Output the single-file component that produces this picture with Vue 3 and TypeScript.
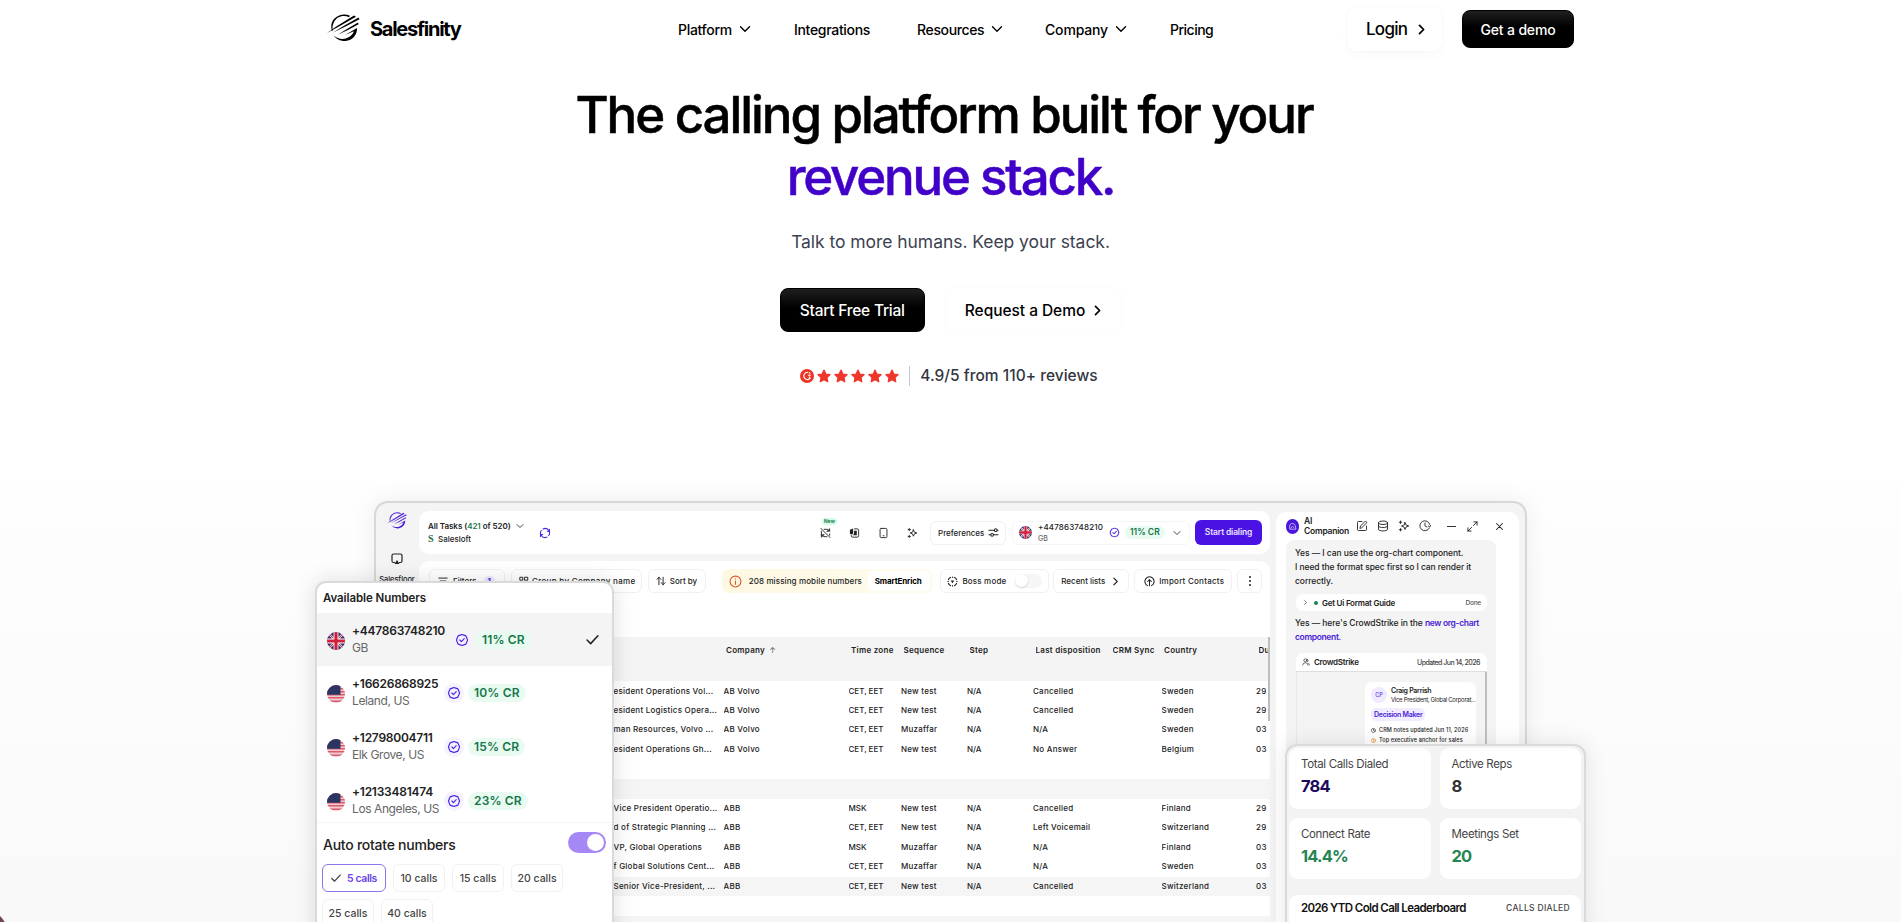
<script setup lang="ts">
import { computed, ref } from 'vue'

interface PhoneNumber {
  number: string
  place: string
  rate: string
  flag: 'uk' | 'us'
}

interface Task {
  title: string
  company: string
  zone: string
  sequence: string
  disposition: string
  country: string
  due: string
}

const navItems = [
  { label: 'Platform', menu: true },
  { label: 'Integrations', menu: false },
  { label: 'Resources', menu: true },
  { label: 'Company', menu: true },
  { label: 'Pricing', menu: false },
]

const numbers: PhoneNumber[] = [
  { number: '+447863748210', place: 'GB', rate: '11% CR', flag: 'uk' },
  { number: '+16626868925', place: 'Leland, US', rate: '10% CR', flag: 'us' },
  { number: '+12798004711', place: 'Elk Grove, US', rate: '15% CR', flag: 'us' },
  { number: '+12133481474', place: 'Los Angeles, US', rate: '23% CR', flag: 'us' },
]
const selected = ref('+447863748210')

const rotateOptions = [5, 10, 15, 20, 25, 40]
const rotateEvery = ref(5)
const autoRotate = ref(true)

const volvo: Task[] = [
  { title: 'esident Operations Vol...', company: 'AB Volvo', zone: 'CET, EET', sequence: 'New test', disposition: 'Cancelled', country: 'Sweden', due: '29' },
  { title: 'esident Logistics Opera...', company: 'AB Volvo', zone: 'CET, EET', sequence: 'New test', disposition: 'Cancelled', country: 'Sweden', due: '29' },
  { title: 'man Resources, Volvo ...', company: 'AB Volvo', zone: 'CET, EET', sequence: 'Muzaffar', disposition: 'N/A', country: 'Sweden', due: '03' },
  { title: 'esident Operations Gh...', company: 'AB Volvo', zone: 'CET, EET', sequence: 'New test', disposition: 'No Answer', country: 'Belgium', due: '03' },
]
const abb: Task[] = [
  { title: 'Vice President Operatio...', company: 'ABB', zone: 'MSK', sequence: 'New test', disposition: 'Cancelled', country: 'Finland', due: '29' },
  { title: 'd of Strategic Planning ...', company: 'ABB', zone: 'CET, EET', sequence: 'New test', disposition: 'Left Voicemail', country: 'Switzerland', due: '29' },
  { title: 'VP, Global Operations', company: 'ABB', zone: 'MSK', sequence: 'Muzaffar', disposition: 'N/A', country: 'Finland', due: '03' },
  { title: 'f Global Solutions Cent...', company: 'ABB', zone: 'CET, EET', sequence: 'Muzaffar', disposition: 'N/A', country: 'Sweden', due: '03' },
  { title: 'Senior Vice-President, ...', company: 'ABB', zone: 'CET, EET', sequence: 'New test', disposition: 'Cancelled', country: 'Switzerland', due: '03' },
]
const groups = computed(() => [volvo, abb])

const stats = [
  { label: 'Total Calls Dialed', value: '784', tone: 'navy' },
  { label: 'Active Reps', value: '8', tone: 'dark' },
  { label: 'Connect Rate', value: '14.4%', tone: 'green' },
  { label: 'Meetings Set', value: '20', tone: 'green' },
]
</script>

<template>
  <!-- Shared icon symbols -->
  <svg class="sprite" aria-hidden="true">
    <symbol id="i-logo" viewBox="0 0 33 28">
      <path fill="currentColor" d="M22 3.200C17 .6 9.500 2 6.800 8.500C5.400 11.500 5.300 14 5.800 16.500L5 17C3.600 13 4 8 7.500 4.600C12 .2 18 -.6 23 1.800Z" />
      <path fill="currentColor" d="M0 19L10 12L27 1.400L29 2.800L12 12.600Z" />
      <path fill="currentColor" d="M6 18.600L17 11.800L31.500 3.600L32.500 5.300L18 12.800Z" />
      <path fill="currentColor" d="M11 20.400L20 15L31 8.600L31.500 10.200L21 16Z" />
      <path fill="currentColor" d="M18 21L30 14C30.500 20.500 25.500 26.500 18.500 27C13.500 27.300 9 25 6.800 21.500C11 25.500 17.500 26 22 23C24.800 21.300 26.300 19.500 26.800 17.200Z" />
    </symbol>
    <symbol id="i-down" viewBox="0 0 12 12"><path class="ln" d="M1.500 3.800L6 8.300L10.500 3.800" /></symbol>
    <symbol id="i-right" viewBox="0 0 12 12"><path class="ln" d="M3.800 1.500L8.300 6L3.800 10.500" /></symbol>
    <symbol id="i-check" viewBox="0 0 12 12"><path class="ln" d="M1 6.500L4.300 9.800L11 2.500" /></symbol>
    <symbol id="i-star" viewBox="0 0 24 24">
      <path fill="currentColor" stroke="currentColor" stroke-width="2" stroke-linejoin="round" d="M12 1.800L15.200 8.500L22.600 9.500L17.200 14.600L18.500 22L12 18.400L5.500 22L6.800 14.600L1.400 9.500L8.800 8.500Z" />
    </symbol>
    <symbol id="i-uk" viewBox="0 0 24 24">
      <clipPath id="ukc"><circle cx="12" cy="12" r="12" /></clipPath>
      <g clip-path="url(#ukc)">
        <path fill="#26306e" d="M0 0H24V24H0Z" />
        <path stroke="#fff" stroke-width="3" d="M0 0L24 24M24 0L0 24" />
        <path stroke="#d42a44" stroke-width="1.400" d="M0 0L24 24M24 0L0 24" />
        <path stroke="#fff" stroke-width="6.500" d="M12 0V24M0 12H24" />
        <path stroke="#d0203c" stroke-width="4.200" d="M12 0V24M0 12H24" />
      </g>
    </symbol>
    <symbol id="i-us" viewBox="0 0 24 24">
      <clipPath id="usc"><circle cx="12" cy="12" r="12" /></clipPath>
      <g clip-path="url(#usc)">
        <path fill="#f0ccd2" d="M0 0H24V24H0Z" />
        <path stroke="#d95c6c" stroke-width="2" d="M0 1H24M0 5H24M0 9H24M0 13H24M0 17H24M0 21.500H24" />
        <path fill="#2b3562" d="M0 0H18V13H0Z" />
      </g>
    </symbol>
    <symbol id="i-seal" viewBox="0 0 24 24">
      <path class="ln" d="M12 2.500L15 3.600L18.600 4.900L20.200 8.500L21.500 12L20.200 15.500L18.600 19.100L15 20.400L12 21.500L9 20.400L5.400 19.100L3.800 15.500L2.500 12L3.800 8.500L5.400 4.900L9 3.600ZM8.300 12L11 14.700L15.800 9.600" />
    </symbol>
    <symbol id="i-sync" viewBox="0 0 24 24">
      <path class="ln" d="M19.500 7A9 9 0 0 0 8 4M4.500 7A9 9 0 0 0 4.500 17M4.500 17A9 9 0 0 0 16 20M19.500 17A9 9 0 0 0 21 10" />
      <path fill="currentColor" d="M22 3V10H15ZM2 21V14H9Z" />
    </symbol>
    <symbol id="i-nosync" viewBox="0 0 24 24">
      <path class="ln" d="M2 2L22 22M9 4H17L21 8M21 3V8H16M3 8V16M3 21V16H8M3 16L8 20H15M21 14V17M4 20L9 15M15 9L20 4" />
    </symbol>
    <symbol id="i-copy" viewBox="0 0 24 24">
      <path class="ln" d="M12 3H18A3 3 0 0 1 21 6V18A3 3 0 0 1 18 21H8A3 3 0 0 1 5 18V16" />
      <path fill="currentColor" d="M2 5L9 2V14H2ZM11 7H17V17H8V15H11Z" />
    </symbol>
    <symbol id="i-phone" viewBox="0 0 24 24"><path class="ln" d="M7 2H17Q19.500 2 19.500 4.500V19.500Q19.500 22 17 22H7Q4.500 22 4.500 19.500V4.500Q4.500 2 7 2ZM11 18H13" /></symbol>
    <symbol id="i-spark" viewBox="0 0 24 24">
      <path class="ln" d="M14 5L16 10L21.500 12L16 14L14 19L12 14L7 12L12 10ZM5 2V7M2.500 4.500H7.500M5 17V22M2.500 19.500H7.500" />
    </symbol>
    <symbol id="i-sliders" viewBox="0 0 24 24">
      <path class="ln" d="M2 7H14M2 17H6M12 17H22M20 7H22" /><circle class="ln" cx="17" cy="7" r="3" /><circle class="ln" cx="9" cy="17" r="3" />
    </symbol>
    <symbol id="i-sort" viewBox="0 0 24 24"><path class="ln" d="M7 21V3M2.500 8L7 3L11.500 8M17 3V21M12.500 16L17 21L21.500 16" /></symbol>
    <symbol id="i-lines" viewBox="0 0 24 24"><path class="ln" d="M2 5H22M5 12H19M8 19H16" /></symbol>
    <symbol id="i-group" viewBox="0 0 24 24"><path class="ln" d="M3 3H9V10H3ZM14 3H21V10H14ZM3 15H9V21H3ZM14 15H21V21H14Z" /></symbol>
    <symbol id="i-info" viewBox="0 0 24 24"><circle class="ln" cx="12" cy="12" r="10" /><path class="ln" d="M12 11V17M12 7V7.500" /></symbol>
    <symbol id="i-boss" viewBox="0 0 24 24">
      <path class="ln" d="M3 8L5 5L8 3M16 3L19 5L21 8M21 16L19 19L16 21M8 21L5 19L3 16M12 2V3M12 21V22M2 12H3M21 12H22" />
      <path fill="currentColor" d="M8 10H16L12 16Z" />
    </symbol>
    <symbol id="i-up" viewBox="0 0 24 24"><path class="ln" d="M8 21A10 10 0 1 1 16 21M12 21V8M8 12L12 8L16 12" /></symbol>
    <symbol id="i-screen" viewBox="0 0 24 24"><path class="ln" d="M7 19H5Q2 19 2 16V5Q2 2 5 2H19Q22 2 22 5V16Q22 19 19 19H17" /><path fill="currentColor" d="M12 14L17 22H7Z" /></symbol>
    <symbol id="i-edit" viewBox="0 0 24 24"><path class="ln" d="M12 3H5Q3 3 3 5V19Q3 21 5 21H19Q21 21 21 19V12M8 16L9 12L19 2L22 5L12 15Z" /></symbol>
    <symbol id="i-db" viewBox="0 0 24 24"><ellipse class="ln" cx="12" cy="5.500" rx="9" ry="3.500" /><path class="ln" d="M3 5.500V18.500C3 23 21 23 21 18.500V5.500M3 12C3 16.500 21 16.500 21 12" /></symbol>
    <symbol id="i-clock" viewBox="0 0 24 24"><path class="ln" d="M20.800 16A10 10 0 1 1 21.500 9M12 6V12L16 14M18.500 12L21.500 14L23 11" /></symbol>
    <symbol id="i-expand" viewBox="0 0 24 24"><path class="ln" d="M14 10L22 2M15 2H22V9M10 14L2 22M2 15V22H9" /></symbol>
    <symbol id="i-x" viewBox="0 0 24 24"><path class="ln" d="M4 4L20 20M20 4L4 20" /></symbol>
    <symbol id="i-users" viewBox="0 0 24 24"><circle class="ln" cx="10" cy="7" r="4.500" /><path class="ln" d="M2 21Q3 14 10 14T18 21M16 3Q20 6 17 11M19 15Q22 17 22 21" /></symbol>
  </svg>

  <div class="page">
    <header class="nav">
      <a class="brand">
        <svg class="brand-mark"><use href="#i-logo" /></svg>
        <span>Salesfinity</span>
      </a>
      <nav class="links">
        <a v-for="item in navItems" :key="item.label" :class="['link', item.label.toLowerCase()]">
          <span>{{ item.label }}</span>
          <svg v-if="item.menu" class="caret"><use href="#i-down" /></svg>
        </a>
      </nav>
      <a class="login"><span>Login</span><svg class="go"><use href="#i-right" /></svg></a>
      <a class="btn-dark demo">Get a demo</a>
    </header>

    <section class="hero">
      <h1><span class="first">The calling platform built for your</span><br><em>revenue stack.</em></h1>
      <p class="sub">Talk to more humans. Keep your stack.</p>
      <div class="cta">
        <a class="btn-dark trial">Start Free Trial</a>
        <a class="request"><span>Request a Demo</span><svg class="go"><use href="#i-right" /></svg></a>
      </div>
      <div class="reviews">
        <svg class="g2" viewBox="0 0 24 24">
          <circle cx="12" cy="12" r="12" fill="#ee3425" />
          <path d="M13.500 5.800A6.200 6.200 0 1 0 17.500 15.800L15.500 13" fill="none" stroke="#fff" stroke-width="2" />
          <path d="M14.500 6.500Q18 5 17.500 7.500L14.500 11H18.500" fill="none" stroke="#fff" stroke-width="1.500" />
        </svg>
        <svg v-for="n in 5" :key="n" class="star"><use href="#i-star" /></svg>
        <span class="score">4.9/5 from 110+ reviews</span>
      </div>
    </section>

    <section class="stage">
      <div class="app">
        <aside class="side">
          <svg class="side-logo"><use href="#i-logo" /></svg>
          <svg class="side-icon"><use href="#i-screen" /></svg>
          <span>Salesfloor</span>
        </aside>

        <main class="main">
          <div class="topbar">
            <div class="tasks">
              <div class="tasks-title">All Tasks (<b>421</b> of 520)<svg><use href="#i-down" /></svg></div>
              <div class="tasks-src"><i>S</i>Salesloft</div>
            </div>
            <svg class="sync"><use href="#i-sync" /></svg>
            <div class="tools">
              <span class="tool"><svg><use href="#i-nosync" /></svg><small>New</small></span>
              <span class="tool"><svg><use href="#i-copy" /></svg></span>
              <span class="tool"><svg><use href="#i-phone" /></svg></span>
              <span class="tool"><svg><use href="#i-spark" /></svg></span>
            </div>
            <div class="box prefs">Preferences<svg><use href="#i-sliders" /></svg></div>
            <div class="box caller">
              <svg class="flag"><use href="#i-uk" /></svg>
              <div class="caller-id"><span>+447863748210</span><small>GB</small></div>
              <svg class="seal"><use href="#i-seal" /></svg>
              <span class="rate">11% CR</span>
              <svg class="mini"><use href="#i-down" /></svg>
            </div>
            <div class="dial">Start dialing</div>
          </div>

          <div class="content">
            <div class="filters">
              <div class="box f-filter"><svg><use href="#i-lines" /></svg>Filters<b>1</b></div>
              <div class="box f-group"><svg><use href="#i-group" /></svg>Group by Company name</div>
              <div class="box f-sort"><svg><use href="#i-sort" /></svg>Sort by</div>
              <div class="missing"><svg><use href="#i-info" /></svg><span>208 missing mobile numbers</span><strong>SmartEnrich</strong></div>
              <div class="box f-boss"><svg><use href="#i-boss" /></svg>Boss mode<i class="off"></i></div>
              <div class="box f-recent">Recent lists<svg class="mini"><use href="#i-right" /></svg></div>
              <div class="box f-import"><svg><use href="#i-up" /></svg>Import Contacts</div>
              <div class="box f-more"><i></i><i></i><i></i></div>
            </div>

            <div class="row head">
              <span></span><span>Company <u>↑</u></span><span>Time zone</span><span>Sequence</span><span>Step</span>
              <span>Last disposition</span><span>CRM Sync</span><span>Country</span><span>Du</span>
            </div>
            <div v-for="(group, g) in groups" :key="g" class="group">
              <div v-for="(t, i) in group" :key="i" class="row" :class="{ active: g === 1 && i === 4 }">
                <span>{{ t.title }}</span><span>{{ t.company }}</span><span>{{ t.zone }}</span><span>{{ t.sequence }}</span><span>N/A</span>
                <span>{{ t.disposition }}</span><span></span><span>{{ t.country }}</span><span>{{ t.due }}</span>
              </div>
            </div>
            <div class="scroll"></div>
          </div>
        </main>

        <aside class="ai">
          <div class="ai-head">
            <svg class="ai-logo" viewBox="0 0 24 28"><rect width="24" height="28" rx="12" fill="#4a16dc" /><path d="M7 19L6.500 13A5.500 6 0 0 1 17 12L18.500 19ZM9 17Q11 11 15 16" fill="none" stroke="#cbb9ff" stroke-width="1.700" /></svg>
            <div class="ai-title">AI<br>Companion</div>
            <svg><use href="#i-edit" /></svg>
            <svg><use href="#i-db" /></svg>
            <svg><use href="#i-spark" /></svg>
            <svg><use href="#i-clock" /></svg>
            <i class="minus"></i>
            <svg class="ex"><use href="#i-expand" /></svg>
            <svg class="close"><use href="#i-x" /></svg>
          </div>
          <div class="chat">
            <p>Yes — I can use the org-chart component.<br>I need the format spec first so I can render it<br>correctly.</p>
            <div class="guide"><svg><use href="#i-right" /></svg><i></i><b>Get Ui Format Guide</b><small>Done</small></div>
            <p>Yes — here's CrowdStrike in the <em>new org-chart<br>component.</em></p>
            <div class="org">
              <div class="org-head"><svg><use href="#i-users" /></svg><b>CrowdStrike</b><small>Updated Jun 14, 2026</small></div>
              <div class="org-body">
                <div class="person">
                  <div class="who">
                    <span class="avatar">CP</span>
                    <div><b>Craig Parrish</b><small>Vice President, Global Corporat...</small></div>
                  </div>
                  <span class="maker">Decision Maker</span>
                  <div class="note"><svg><use href="#i-clock" /></svg>CRM notes updated Jun 11, 2026</div>
                  <div class="note warm"><svg><use href="#i-info" /></svg>Top executive anchor for sales</div>
                </div>
              </div>
            </div>
          </div>
        </aside>
      </div>

      <div class="popup">
        <h3>Available Numbers</h3>
        <div v-for="n in numbers" :key="n.number" class="num" :class="{ on: n.number === selected }" @click="selected = n.number">
          <svg class="flag"><use :href="`#i-${n.flag}`" /></svg>
          <div class="num-id"><b>{{ n.number }}</b><small>{{ n.place }}</small></div>
          <span class="seal-bg"><svg><use href="#i-seal" /></svg></span>
          <span class="rate">{{ n.rate }}</span>
          <svg v-if="n.number === selected" class="tick"><use href="#i-check" /></svg>
        </div>
        <div class="rotate">
          <span>Auto rotate numbers</span>
          <i class="switch" :class="{ on: autoRotate }" @click="autoRotate = !autoRotate"></i>
        </div>
        <div class="chips">
          <span v-for="c in rotateOptions" :key="c" class="chip" :class="{ on: c === rotateEvery }" @click="rotateEvery = c">
            <svg v-if="c === rotateEvery"><use href="#i-check" /></svg>{{ c }} calls
          </span>
        </div>
      </div>

      <div class="stats">
        <div v-for="s in stats" :key="s.label" class="stat">
          <span>{{ s.label }}</span>
          <b :class="s.tone">{{ s.value }}</b>
        </div>
        <div class="board"><b>2026 YTD Cold Call Leaderboard</b><span>CALLS DIALED</span></div>
      </div>
    </section>

    <div class="corner"></div>
  </div>
</template>

<style>
body {
  margin: 0;
  background: #fff;
}
.ln {
  fill: none;
  stroke: currentColor;
  stroke-width: var(--lw, 1.6);
  stroke-linecap: round;
  stroke-linejoin: round;
}
</style>

<style scoped>
.sprite {
  position: absolute;
  width: 0;
  height: 0;
}
.page {
  position: relative;
  box-sizing: border-box;
  width: 100%;
  height: 922px;
  overflow: hidden;
  font-family: Inter, "Liberation Sans", sans-serif;
  color: #000;
  background: linear-gradient(#fff 478px, #fefefe 484px, #fcfcfc 650px, #f9f9f9 922px);
}
.page *,
.page *::before {
  box-sizing: border-box;
}
svg,
a {
  flex: none;
}
i,
em,
u {
  font-style: normal;
  text-decoration: none;
}

/* header */
.nav {
  display: flex;
  align-items: center;
  height: 58px;
  padding-left: 327px;
}
.brand {
  display: flex;
  align-items: center;
  width: 351px;
  height: 56px;
  gap: 10px;
  font-size: 20px;
  font-weight: 700;
  letter-spacing: -0.063em;
}
.brand-mark {
  width: 33px;
  height: 28px;
}
.brand,
.brand-mark {
  margin-top: -1px;
}
.links {
  display: flex;
  width: 669px;
  font-size: 14px;
  font-weight: 500;
  letter-spacing: -0.022em;
}
.link {
  display: flex;
  align-items: center;
  gap: 7px;
}
.caret {
  --lw: 1.4;
  width: 12px;
  height: 12px;
}
.platform { width: 116px; }
.integrations { width: 123px; }
.resources {
  width: 128px;
  letter-spacing: -0.026em;
}
.company {
  width: 125px;
  letter-spacing: -0.012em;
}
.pricing { letter-spacing: -0.036em; }
.login {
  display: flex;
  align-items: center;
  width: 95px;
  height: 44px;
  padding-left: 19px;
  gap: 9px;
  font-size: 17px;
  font-weight: 500;
  letter-spacing: -0.044em;
  background: #fff;
  border-radius: 8px;
  box-shadow: 0 5px 10px rgba(0, 0, 0, 0.025), 0 0 2px rgba(0, 0, 0, 0.06);
}
.go {
  --lw: 1.9;
  width: 11px;
  height: 11px;
}
.btn-dark {
  display: flex;
  align-items: center;
  justify-content: center;
  color: #fff;
  font-weight: 500;
  background: linear-gradient(#1f1f1f, #000 45%);
  border: 1px solid #000;
  border-radius: 8px;
}
.demo {
  width: 112px;
  height: 38px;
  margin-left: 20px;
  font-size: 14px;
  letter-spacing: -0.012em;
}

/* hero */
.hero {
  display: flex;
  flex-direction: column;
  align-items: center;
  padding-top: 26px;
}
h1 {
  margin: 0;
  font-size: 51px;
  line-height: 62px;
  font-weight: 500;
  letter-spacing: -0.0405em;
  text-align: center;
  -webkit-text-stroke: 0.5px currentColor;
}
.first {
  padding-right: 13px;
}
h1 em {
  color: #4000c8;
  letter-spacing: -0.043em;
}
.sub {
  margin: 22px 0 0;
  font-size: 17.5px;
  line-height: 24px;
  letter-spacing: -0.003em;
  color: #3d4250;
}
.cta {
  display: flex;
  margin-top: 34px;
  gap: 21px;
  font-size: 15.5px;
}
.trial {
  width: 145px;
  height: 44px;
  letter-spacing: -0.015em;
}
.request {
  display: flex;
  align-items: center;
  height: 44px;
  padding: 0 18px 0 19px;
  gap: 7px;
  font-weight: 500;
  letter-spacing: -0.003em;
  border-radius: 8px;
  box-shadow: 0 0 2px rgba(0, 0, 0, 0.05);
}
.reviews {
  display: flex;
  align-items: center;
  height: 20px;
  margin-top: 34px;
  margin-right: 3px;
  gap: 3px;
  color: #f0352a;
}
.g2 {
  width: 14px;
  height: 14px;
}
.star {
  width: 14px;
  height: 14px;
}
.score {
  margin-left: 7px;
  padding-left: 10px;
  border-left: 1px solid #c8c8cc;
  font-size: 15.5px;
  line-height: 20px;
  font-weight: 500;
  letter-spacing: 0.001em;
  color: #33363f;
}

/* product frame */
.stage {
  position: relative;
  margin-top: 115px;
  padding-left: 374px;
}
.app {
  display: flex;
  align-items: flex-start;
  width: 1153px;
  height: 460px;
  background: #f4f4f4;
  border: 2px solid #d6d7d8;
  border-radius: 14px;
  box-shadow: 0 0 24px rgba(0, 0, 0, 0.07);
  font-size: 8px;
  font-weight: 500;
  color: #222;
}
.side {
  display: flex;
  flex-direction: column;
  align-items: center;
  width: 43px;
  padding-top: 9px;
  padding-right: 1px;
  font-size: 7.500px;
  letter-spacing: -0.01em;
}
.side-logo {
  width: 20px;
  height: 17px;
  color: #4a22d8;
}
.side-icon {
  --lw: 2.4;
  width: 12px;
  height: 12px;
  margin: 24px 0 10px;
}
.main {
  width: 851px;
  padding-top: 8px;
}
.topbar {
  display: flex;
  align-items: center;
  height: 43px;
  padding: 0 8px 0 9px;
  background: #fff;
  border-radius: 10px;
}
.box {
  display: flex;
  align-items: center;
  height: 24px;
  background: #fff;
  border: 1px solid #f0f0f0;
  border-radius: 6px;
}
.tasks {
  width: 108px;
  line-height: 12.500px;
}
.tasks-title {
  display: flex;
  align-items: center;
  font-weight: 600;
  white-space: pre;
  letter-spacing: -0.006em;
}
.tasks-title b {
  font-weight: 600;
  color: #16794c;
}
.tasks-title svg {
  --lw: 1.3;
  width: 8px;
  height: 8px;
  margin-left: 5px;
}
.tasks-src i {
  display: inline-block;
  width: 10px;
  font: bold 10px "Liberation Serif", serif;
  color: #1d6b45;
}
.sync {
  --lw: 2.2;
  width: 12px;
  height: 12px;
  margin-left: 3px;
  color: #4f26e0;
}
.tools {
  display: flex;
  gap: 18px;
  margin-left: 269px;
}
.tool {
  position: relative;
  height: 12px;
}
.tool svg {
  --lw: 2;
  width: 11px;
  height: 12px;
}
.tool small {
  position: absolute;
  left: 2px;
  top: -9px;
  padding: 0 2px;
  font-size: 5px;
  line-height: 7px;
  font-weight: 600;
  color: #0d6b43;
  background: #d5fbe7;
  border-radius: 3px;
}
.prefs {
  width: 76px;
  margin-left: 12px;
  padding-left: 7px;
  gap: 4px;
}
.prefs svg {
  --lw: 2.2;
  width: 11px;
  height: 11px;
}
.caller {
  width: 178px;
  margin-left: 6px;
  padding-left: 6px;
  border-color: #f5f5f5;
}
.caller .flag {
  width: 13px;
  height: 13px;
}
.caller-id {
  display: flex;
  flex-direction: column;
  width: 66px;
  margin-left: 6px;
  line-height: 12px;
  letter-spacing: 0.017em;
}
.caller-id small {
  font-size: 7px;
  color: #666;
}
.seal {
  --lw: 2.2;
  width: 11px;
  height: 11px;
  margin-left: 5px;
  color: #4f26e0;
}
.rate {
  background: #e9fbf1;
  color: #15764a;
  font-weight: 600;
}
.caller .rate {
  margin: 0 8px 0 5px;
  padding: 0 5px;
  font-size: 8.500px;
  line-height: 13px;
  border-radius: 7px;
}
.mini {
  --lw: 1.3;
  width: 8px;
  height: 8px;
}
.dial {
  width: 67px;
  height: 25px;
  margin-left: 5px;
  line-height: 25px;
  text-align: center;
  font-size: 8.500px;
  font-weight: 600;
  letter-spacing: -0.02em;
  color: #e9e2ff;
  background: #4b12e4;
  border-radius: 6px;
}
.content {
  position: relative;
  height: 380px;
  margin-top: 7px;
  overflow: hidden;
  background: #fff;
  border-radius: 10px 10px 0 0;
}
.filters {
  display: flex;
  height: 76px;
  padding: 8px 8px 0 10px;
}
.filters .box svg {
  --lw: 2.3;
  width: 10px;
  height: 10px;
}
.filters .box svg.mini {
  --lw: 1.5;
  width: 9px;
  height: 9px;
}
.f-filter {
  width: 76px;
  padding-left: 8px;
  gap: 5px;
}
.f-filter b {
  padding: 0 4px;
  margin-left: 2px;
  color: #4f26e0;
  background: #eee9ff;
  border-radius: 5px;
}
.f-group {
  width: 131px;
  margin-left: 6px;
  padding-left: 7px;
  gap: 3px;
  letter-spacing: 0.038em;
}
.f-sort {
  width: 58px;
  margin-left: 6px;
  padding-left: 7px;
  gap: 4px;
}
.missing {
  display: flex;
  align-items: center;
  width: 212px;
  height: 24px;
  margin-left: 16px;
  padding: 2px 3px 2px 7px;
  letter-spacing: 0.014em;
  background: linear-gradient(90deg, #fdf8e2, #fffcee);
  border-radius: 7px;
}
.missing svg {
  --lw: 2;
  width: 13px;
  height: 13px;
  color: #e0571e;
}
.missing span {
  width: 121px;
  padding-left: 7px;
}
.missing strong {
  flex: 1;
  height: 20px;
  margin-left: 5px;
  line-height: 20px;
  padding-left: 7px;
  font-weight: 700;
  letter-spacing: -0.018em;
  color: #000;
  background: #fff;
  border-radius: 5px;
}
.f-boss {
  width: 109px;
  margin-left: 7px;
  padding-left: 6px;
  gap: 4px;
  letter-spacing: 0.022em;
}
.off {
  position: relative;
  width: 27px;
  height: 14px;
  margin-left: 5px;
  background: #f6f6f6;
  border-radius: 7px;
}
.off::before {
  content: "";
  display: block;
  width: 13px;
  height: 13px;
  background: #fff;
  border-radius: 50%;
  box-shadow: 0 1px 2px rgba(0, 0, 0, 0.15);
}
.f-recent {
  width: 76px;
  margin-left: 4px;
  padding-left: 7px;
  gap: 6px;
}
.f-import {
  width: 98px;
  margin-left: 5px;
  padding-left: 9px;
  gap: 4px;
  letter-spacing: 0.029em;
}
.filters .f-import svg,
.filters .f-boss svg {
  width: 11px;
  height: 11px;
}
.f-more {
  flex-direction: column;
  justify-content: center;
  gap: 2px;
  width: 25px;
  margin-left: 5px;
}
.f-more i {
  width: 2px;
  height: 2px;
  background: #222;
  border-radius: 1px;
}
.row {
  display: grid;
  grid-template-columns: 110px 125px 52.500px 66px 66px 77px 51.500px 94.500px 1fr;
  height: 19.450px;
  padding-left: 194.500px;
  line-height: 19.450px;
  white-space: nowrap;
  letter-spacing: 0.03em;
}
.row span {
  overflow: hidden;
}
.row span:nth-child(5) {
  letter-spacing: -0.01em;
}
.row span:nth-child(3) {
  letter-spacing: 0;
}
.head {
  height: 44px;
  margin-bottom: 0.500px;
  padding-left: 197px;
  line-height: 26px;
  font-weight: 600;
  background: #f4f4f4;
}
.head span,
.head span:nth-child(3),
.head span:nth-child(5) {
  line-height: 26px;
  letter-spacing: 0.034em;
}
.head u {
  margin-left: 2px;
  font-weight: 400;
  color: #666;
}
.group + .group {
  margin-top: 19.500px;
  border-top: 20px solid #f5f5f5;
}
.row.active {
  background: #f5f5f5;
}
.group + .group::after {
  content: "";
  display: block;
  height: 30px;
  margin-top: 20px;
  background: #f5f5f5;
}
.scroll {
  position: absolute;
  right: 0;
  top: 76px;
  width: 2px;
  height: 84px;
  background: #bdbdbd;
}

/* companion panel */
.ai {
  width: 243px;
  height: 440px;
  margin: 9px 0 0 6px;
  padding-left: 10px;
  background: #fff;
  border-radius: 10px 10px 0 0;
}
.ai-head {
  display: flex;
  align-items: center;
  height: 28px;
}
.ai-logo {
  width: 13px;
  height: 15px;
}
.ai-title {
  width: 53px;
  padding-left: 5px;
  font-size: 8.500px;
  line-height: 10.500px;
  font-weight: 600;
  letter-spacing: -0.028em;
}
.ai-head > svg + svg,
.ai-title + svg {
  --lw: 1.8;
  width: 12px;
  height: 12px;
  margin-right: 9px;
}
.ai-title + svg {
  margin-left: 4px;
}
.minus {
  width: 9px;
  height: 1px;
  margin: 0 11px 0 7px;
  background: #333;
}
.ai-head > svg.ex {
  --lw: 2;
  width: 11px;
  height: 11px;
  margin: 0;
}
.ai-head > svg.close {
  --lw: 2.800;
  width: 9px;
  height: 9px;
  margin: 0 0 0 17px;
}
.chat {
  width: 210px;
  height: 400px;
  padding: 6px 0 0 9px;
  background: #f4f4f4;
  border-radius: 8px;
}
.chat p {
  margin: 0;
  font-size: 8.500px;
  line-height: 14px;
  letter-spacing: -0.009em;
  white-space: nowrap;
}
.chat p em {
  font-weight: 600;
  letter-spacing: -0.041em;
  color: #4a22d8;
}
.guide {
  display: flex;
  align-items: center;
  width: 191px;
  height: 17px;
  margin: 6px 0 5px 1px;
  padding: 0 6px 0 7px;
  background: #fff;
  border-radius: 7px;
}
.guide svg {
  width: 5px;
  height: 5px;
}
.guide i {
  width: 4px;
  height: 4px;
  margin: 0 4px 0 6px;
  background: #16864f;
  border-radius: 50%;
}
.guide b {
  flex: 1;
  font-weight: 600;
  letter-spacing: -0.03em;
}
.guide small {
  font-size: 6.500px;
  letter-spacing: -0.030em;
  color: #555;
}
.org {
  width: 191px;
  height: 200px;
  margin: 9px 0 0 1px;
  border-radius: 7px 7px 0 0;
}
.org-head {
  display: flex;
  align-items: center;
  height: 19px;
  padding: 0 7px 0 6px;
  background: #fff;
  border-radius: 7px 7px 0 0;
  border-bottom: 1px solid #dedede;
}
.org-head svg {
  --lw: 2;
  width: 8px;
  height: 8px;
}
.org-head b {
  flex: 1;
  padding-left: 4px;
  font-weight: 600;
  letter-spacing: -0.035em;
}
.org-head small {
  font-size: 7px;
  letter-spacing: -0.075em;
  color: #444;
}
.org-body {
  display: flex;
  height: 180px;
  padding: 10px 9px 0 68px;
  border-left: 1px solid #e8e8e8;
  border-right: 2px solid #bfbfbf;
}
.person {
  flex: 1;
  padding: 5px 0 0 6px;
  background: #fff;
  border-radius: 7px;
  white-space: nowrap;
}
.who {
  display: flex;
  gap: 4px;
}
.avatar {
  width: 16px;
  height: 16px;
  line-height: 16px;
  text-align: center;
  font-size: 5.500px;
  color: #5a35e0;
  background: #efeaff;
  border-radius: 50%;
}
.who div {
  display: flex;
  flex-direction: column;
  line-height: 8.500px;
}
.who b {
  font-size: 7px;
  font-weight: 600;
  letter-spacing: -0.04em;
}
.who small {
  font-size: 6px;
  font-weight: 400;
  letter-spacing: -0.05em;
}
.maker {
  display: inline-block;
  margin: 4px 0 4px;
  padding: 0 3px;
  font-size: 7px;
  line-height: 13px;
  font-weight: 600;
  letter-spacing: -0.04em;
  color: #4a22d8;
  background: #f1ecff;
  border-radius: 5px;
}
.note {
  display: flex;
  align-items: center;
  gap: 3px;
  height: 10px;
  font-size: 5.500px;
  letter-spacing: 0.02em;
}
.note svg {
  --lw: 3;
  width: 5px;
  height: 5px;
}
.warm svg {
  color: #e8862a;
}

/* numbers popup */
.popup {
  position: absolute;
  left: 315px;
  top: 80px;
  width: 299px;
  height: 380px;
  color: #222;
  background: #fff;
  border: 2px solid #dadada;
  border-radius: 11px;
  box-shadow: 0 0 22px rgba(0, 0, 0, 0.13);
  overflow: hidden;
}
.popup h3 {
  margin: 0;
  height: 30px;
  padding-left: 6px;
  font-size: 11.500px;
  line-height: 30px;
  font-weight: 600;
  letter-spacing: -0.007em;
}
.num {
  display: flex;
  align-items: flex-start;
  height: 54px;
  padding: 8px 9px 0 10px;
}
.num:nth-of-type(4) {
  height: 48px;
}
.num.on {
  height: 53px;
  background: #f4f4f4;
}
.num .flag {
  width: 18px;
  height: 18px;
  margin-top: 11px;
}
.num-id {
  display: flex;
  flex-direction: column;
  width: 94px;
  margin-left: 7px;
  font-size: 12px;
  line-height: 17px;
  padding-top: 0.500px;
}
.num:not(.on) .num-id {
  width: 86px;
}
.num-id b {
  font-weight: 600;
  letter-spacing: -0.021em;
}
.num-id small {
  font-size: 12px;
  letter-spacing: -0.034em;
  color: #666;
  white-space: nowrap;
}
.seal-bg {
  display: flex;
  align-items: center;
  justify-content: center;
  width: 20px;
  height: 20px;
  margin: 9px 4px 0 6px;
  border-radius: 50%;
  background: #f5f2ff;
  color: #4f26e0;
}
.seal-bg svg {
  --lw: 2;
  width: 14px;
  height: 14px;
}
.num .rate {
  margin-top: 10px;
  padding: 0 6px;
  font-size: 12px;
  line-height: 18px;
  letter-spacing: 0.013em;
  border-radius: 9px;
}
.tick {
  --lw: 1.4;
  width: 13px;
  height: 13px;
  margin: 12px 4px 0 auto;
}
.rotate {
  display: flex;
  align-items: center;
  justify-content: space-between;
  height: 42px;
  padding: 0 6px 3px 6px;
  border-top: 1px solid #f4f4f4;
  font-size: 14px;
  font-weight: 500;
  letter-spacing: -0.018em;
}
.rotate span {
  padding-top: 4px;
}
.switch {
  width: 38px;
  height: 21px;
  padding: 2px;
  background: #ddd;
  border-radius: 11px;
}
.switch::before {
  content: "";
  display: block;
  width: 17px;
  height: 17px;
  background: #fff;
  border-radius: 50%;
}
.switch.on {
  background: #a588f6;
}
.switch.on::before {
  margin-left: 17px;
}
.chips {
  display: flex;
  flex-wrap: wrap;
  padding: 0 40px 0 5px;
  gap: 7px;
}
.chip {
  display: flex;
  align-items: center;
  justify-content: center;
  width: 52px;
  height: 28px;
  font-size: 10.500px;
  font-weight: 500;
  color: #444;
  border: 1px solid #f1f1f1;
  border-radius: 6px;
}
.chip.on {
  width: 64px;
  font-weight: 600;
  letter-spacing: -0.038em;
  color: #6a44ea;
  border-color: #8e72f0;
}
.chip svg {
  width: 10px;
  height: 10px;
  margin-right: 6px;
  color: #444;
}

/* stats panel */
.stats {
  position: absolute;
  left: 1285px;
  top: 243px;
  display: grid;
  grid-template-columns: 1fr 1fr;
  align-content: start;
  gap: 9px;
  width: 301px;
  height: 230px;
  padding: 2px 3px 0 2px;
  background: #f3f3f3;
  border: 2px solid #dadada;
  border-radius: 12px;
  box-shadow: 0 0 22px rgba(0, 0, 0, 0.1);
}
.stat {
  display: flex;
  flex-direction: column;
  height: 61px;
  padding: 8px 0 0 12px;
  font-size: 11.500px;
  line-height: 17px;
  letter-spacing: -0.030em;
  color: #444;
  background: #fff;
  border-radius: 9px;
}
.stat b {
  font-size: 16.500px;
  line-height: 26px;
  letter-spacing: -0.050em;
}
.navy { color: #1c0a5c; }
.dark { color: #333; }
.green { color: #258653; }
.board {
  grid-column: 1 / 3;
  display: flex;
  justify-content: space-between;
  height: 80px;
  margin-top: 7px;
  padding: 0 11px 0 12px;
  line-height: 27px;
  background: #fff;
  border-radius: 9px;
}
.board b {
  font-size: 11.500px;
  font-weight: 600;
  letter-spacing: -0.053em;
  color: #111;
}
.board span {
  font-size: 8.500px;
  font-weight: 500;
  letter-spacing: 0.039em;
  color: #444;
}
.corner {
  position: absolute;
  left: -46px;
  top: 908px;
  width: 54px;
  height: 54px;
  background: #6f4a55;
  border-radius: 50%;
}
</style>
